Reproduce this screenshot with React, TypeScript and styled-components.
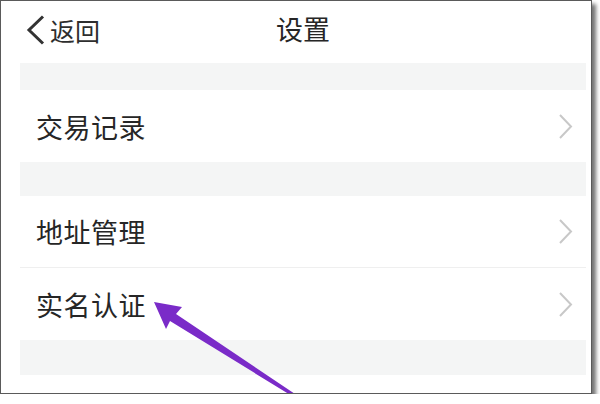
import styled, { createGlobalStyle } from "styled-components";

const GlobalStyle = createGlobalStyle`
  html, body {
    margin: 0;
    padding: 0;
    background: #ffffff;
  }
  body {
    font-family: "Noto Sans CJK SC", "Noto Sans", sans-serif;
  }
`;

const Frame = styled.div`
  position: relative;
  width: 590px;
  height: 392px;
  border: 1px solid #5a5a5a;
  box-shadow: 4px 4px 4px rgba(0, 0, 0, 0.55);
  background: #ffffff;
  overflow: hidden;
  display: flex;
  flex-direction: column;
`;

const Header = styled.div`
  height: 62px;
  margin: 0 5px 0 19px;
  display: grid;
  grid-template-columns: 1fr auto 1fr;
  align-items: center;
`;

const BackButton = styled.div`
  display: flex;
  align-items: center;
  gap: 5px;
  padding-left: 6px;
  margin-top: -4px;
  color: #2e2e2e;
  font-size: 25px;
`;

const Title = styled.div`
  font-size: 27px;
  color: #262626;
  margin-top: -8px;
`;

const Content = styled.div`
  margin: 0 5px 0 19px;
  display: flex;
  flex-direction: column;
`;

const Band = styled.div<{ $h: number }>`
  height: ${(p) => p.$h}px;
  background: #f4f5f5;
`;

const Row = styled.div<{ $divider?: boolean }>`
  height: 72px;
  display: flex;
  align-items: center;
  justify-content: space-between;
  padding: 0 13px 0 16px;
  border-bottom: ${(p) => (p.$divider ? "1px solid #efefef" : "none")};
  box-sizing: border-box;
`;

const Label = styled.span`
  font-size: 27px;
  color: #262626;
  letter-spacing: 0.5px;
`;

const ArrowOverlay = styled.svg`
  position: absolute;
  left: 0;
  top: 0;
  pointer-events: none;
`;

const Chevron = () => (
  <svg width="15" height="25" viewBox="0 0 15 25">
    <polyline points="2,1 13,12.5 2,24" fill="none" stroke="#c8c8c8" strokeWidth="2" />
  </svg>
);

const BackIcon = () => (
  <svg width="19" height="30" viewBox="0 0 19 30">
    <polyline points="17,1.5 3,15 17,28.5" fill="none" stroke="#333" strokeWidth="3" />
  </svg>
);

const App = () => {
  return (
    <>
      <GlobalStyle />
      <Frame>
        <Header>
          <BackButton>
            <BackIcon />
            <span>返回</span>
          </BackButton>
          <Title>设置</Title>
          <div />
        </Header>
        <Content>
          <Band $h={27} />
          <Row>
            <Label>交易记录</Label>
            <Chevron />
          </Row>
          <Band $h={34} />
          <Row $divider>
            <Label>地址管理</Label>
            <Chevron />
          </Row>
          <Row>
            <Label>实名认证</Label>
            <Chevron />
          </Row>
          <Band $h={35} />
        </Content>
        <ArrowOverlay width="590" height="392" viewBox="1 1 590 392">
          <polygon
            points="154,302 182,307 176,314 298,396 292,396 170,321 166,329"
            fill="#7a2bc8"
          />
        </ArrowOverlay>
      </Frame>
    </>
  );
};

export default App;
